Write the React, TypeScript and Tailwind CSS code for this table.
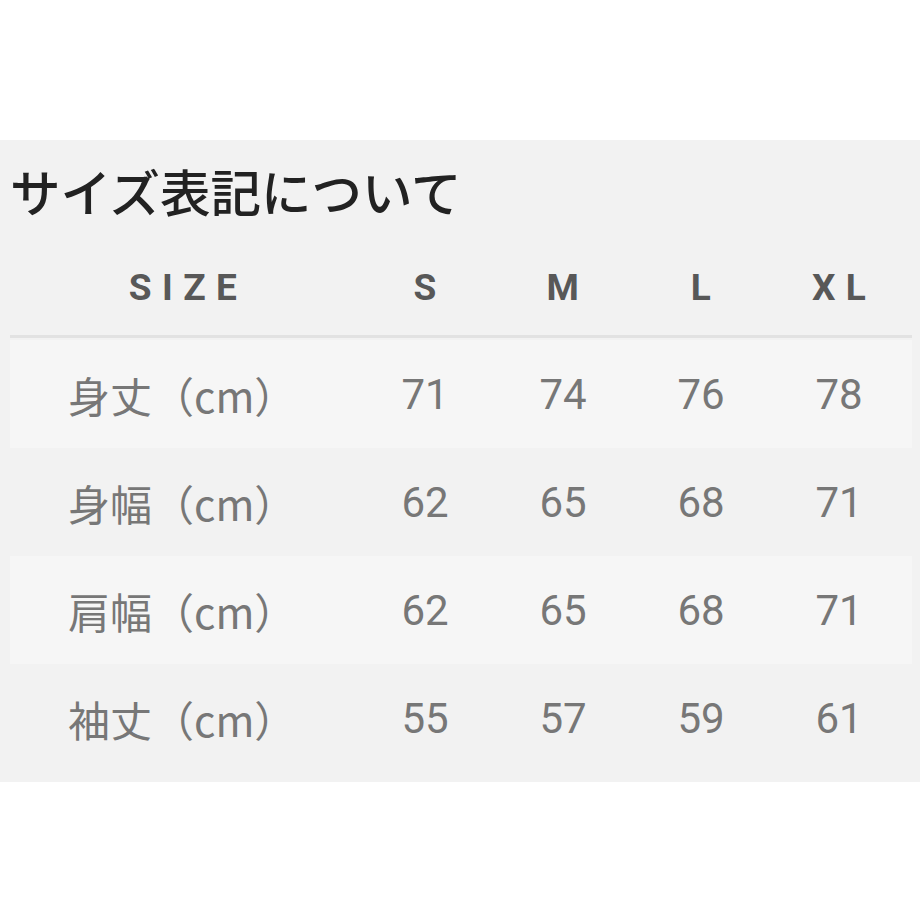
import React from 'react';

const rows: { label: string; values: string[] }[] = [
  { label: '身丈（cm）', values: ['71', '74', '76', '78'] },
  { label: '身幅（cm）', values: ['62', '65', '68', '71'] },
  { label: '肩幅（cm）', values: ['62', '65', '68', '71'] },
  { label: '袖丈（cm）', values: ['55', '57', '59', '61'] },
];

const sizes = ['S', 'M', 'L', 'XL'];

const jp = { fontFamily: '"Noto Sans CJK JP", "Noto Sans", sans-serif' };
const roboto = { fontFamily: 'Roboto, "Liberation Sans", sans-serif' };

export default function App() {
  return (
    <div className="h-[920px] w-[920px] bg-white pt-[140px]">
      <div className="bg-[#f2f2f2] pb-[10px] pl-[10px] pr-[8px]">
        <div className="flex h-[100px] items-center">
          <h2 className="text-[50.5px] leading-none font-medium text-[#222]" style={jp}>
            サイズ表記について
          </h2>
        </div>

        <div
          className="grid h-[95px] grid-cols-[346px_repeat(4,138px)] items-center text-[37px] font-bold tracking-[0.28em] text-[#585858]"
          style={roboto}
        >
          <div className="pl-[10px] text-center">SIZE</div>
          {sizes.map((s) => (
            <div key={s} className="pl-[10px] text-center">
              {s}
            </div>
          ))}
        </div>

        <div className="h-[3px] bg-[#e2e2e2]" />

        <div className="mt-[2px]">
          {rows.map((row, i) => (
            <div
              key={row.label}
              className={`grid h-[108px] grid-cols-[346px_repeat(4,138px)] items-center text-[42px] text-[#777] ${
                i % 2 === 0 ? 'bg-[#f6f6f6]' : ''
              }`}
            >
              <div className="pl-[58px]" style={jp}>
                {row.label}
              </div>
              {row.values.map((v, j) => (
                <div key={j} className="text-center" style={roboto}>
                  {v}
                </div>
              ))}
            </div>
          ))}
        </div>
      </div>
    </div>
  );
}
